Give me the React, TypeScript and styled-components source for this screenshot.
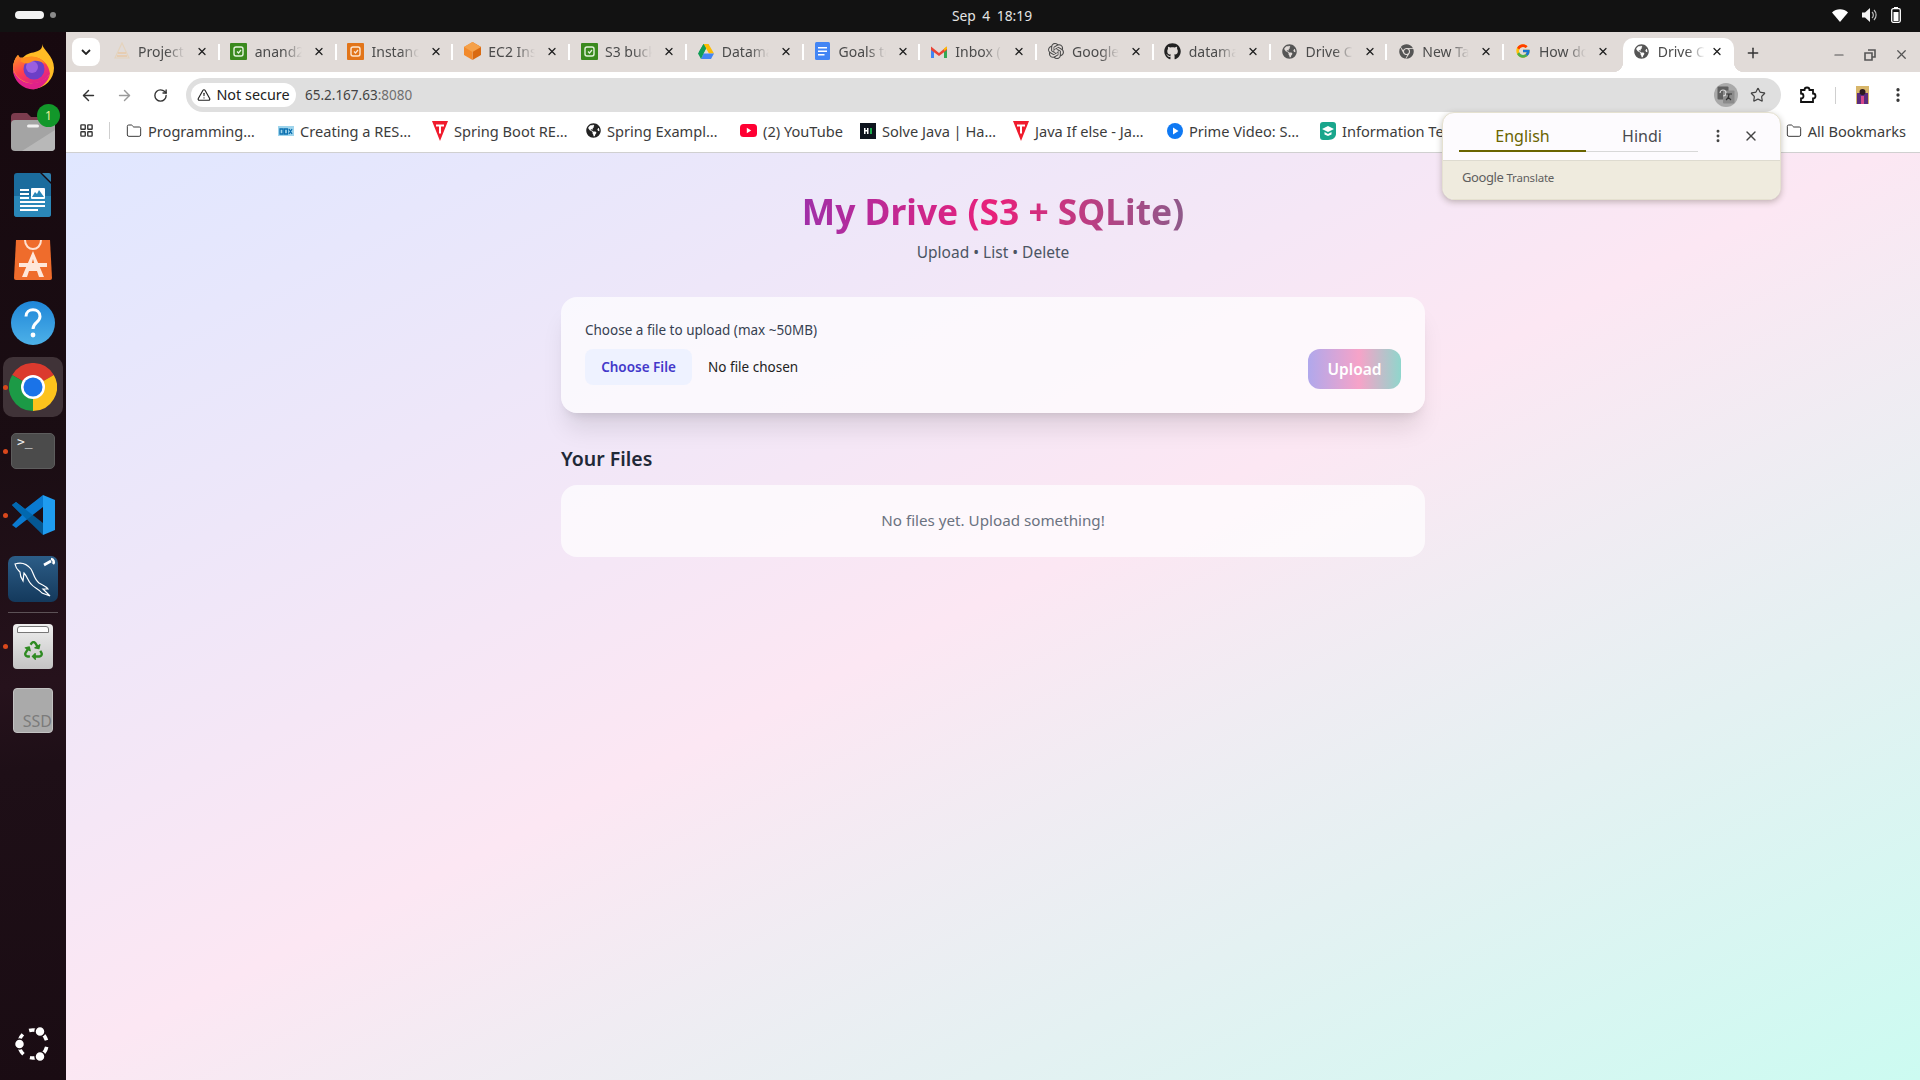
import type { ReactNode } from "react";
import { ArrowLeft, ArrowRight, EllipsisVertical, Folder, LayoutGrid, Minus, Plus, RotateCw, Star, TriangleAlert, X } from "lucide-react";
import { FaChrome, FaGithub, FaGlobeAmericas, FaRecycle } from "react-icons/fa";
import { FcGoogle } from "react-icons/fc";
import { SiOpenai } from "react-icons/si";
import styled, { createGlobalStyle } from "styled-components";

const GlobalStyle = createGlobalStyle`
  html, body { margin: 0; height: 100%; }
  body { font-family: "Noto Sans", "Liberation Sans", sans-serif; overflow: hidden; }
  #root { height: 100%; }
  * { box-sizing: border-box; }
`;

const Desktop = styled.div`
  width: 1920px;
  height: 1080px;
  display: flex;
  flex-direction: column;
  background: #111;
`;

const TopBar = styled.header`
  height: 32px;
  flex: none;
  display: grid;
  grid-template-columns: 1fr auto 1fr;
  align-items: center;
  padding: 0 19px 2px 15px;
  background: #121212;
  color: #e4e4e4;
  font-size: 13.8px;
`;

const Workspaces = styled.div`
  display: flex;
  align-items: center;
  gap: 6px;
`;

const WorkspacePill = styled.span<{ $active?: boolean }>`
  width: ${(p) => (p.$active ? "29px" : "6px")};
  height: ${(p) => (p.$active ? "8px" : "6px")};
  border-radius: 4px;
  background: ${(p) => (p.$active ? "#f2f2f2" : "#8a8a8a")};
`;

const Clock = styled.div`
  padding-left: 68px;
  word-spacing: 3px;
`;

const Tray = styled.div`
  display: flex;
  justify-content: flex-end;
  align-items: center;
  gap: 14px;
`;

const Body = styled.div`
  flex: 1;
  min-height: 0;
  display: flex;
`;

const Dock = styled.nav`
  width: 66px;
  flex: none;
  display: flex;
  flex-direction: column;
  padding: 3px 0 4px;
  background: linear-gradient(172deg, #17090f 0%, #1a0d13 40%, #26121c 62%, #1e0f17 70%, #1a0c13 100%);
`;

const DockItem = styled.div<{ $bottom?: boolean }>`
  position: relative;
  height: 64px;
  flex: none;
  display: flex;
  align-items: center;
  justify-content: center;
  margin-top: ${(p) => (p.$bottom ? "auto" : "0")};
`;

const DockTile = styled.div`
  width: 60px;
  height: 60px;
  border-radius: 10px;
  background: #403338;
  display: flex;
  align-items: center;
  justify-content: center;
`;

const RunDot = styled.span`
  position: absolute;
  left: 3px;
  top: 50%;
  width: 5px;
  height: 5px;
  margin-top: -2px;
  border-radius: 50%;
  background: #d9481c;
`;

const DockBadge = styled.span`
  position: absolute;
  right: 6px;
  top: 5px;
  width: 23px;
  height: 23px;
  border-radius: 50%;
  background: #12972a;
  color: #f1ef9c;
  font-size: 12px;
  display: flex;
  align-items: center;
  justify-content: center;
`;

const DockRule = styled.div`
  height: 1px;
  margin: 1px 8px 1px;
  background: #5c5156;
  flex: none;
`;

const TerminalIcon = styled.div`
  width: 44px;
  height: 36px;
  border-radius: 5px;
  background: #4b4b4b;
  border: 1px solid #5d5d5d;
  color: #f2f2f2;
  font: 13px/15px "DejaVu Sans Mono", monospace;
  padding: 0 0 0 5px;
`;

const TrashTile = styled.div`
  width: 40px;
  height: 45px;
  border-radius: 4px;
  background: linear-gradient(#eeeeee, #c4c4c4);
  display: flex;
  flex-direction: column;
  align-items: center;
  gap: 8px;
  padding-top: 2px;
`;

const TrashSlot = styled.span`
  width: 32px;
  height: 7px;
  background: #fdfdfd;
  border: 1px solid #777;
  border-radius: 3px 3px 0 0;
`;

const SsdTile = styled.div`
  width: 40px;
  height: 45px;
  border-radius: 4px;
  background: #aaaaaa;
  border: 1px solid #c2c2c2;
  color: #7b7b7b;
  font-size: 16px;
  line-height: 18px;
  display: flex;
  align-items: flex-end;
  justify-content: flex-end;
  padding: 0 0 2px;
  overflow: hidden;
`;

const MysqlTile = styled.div`
  width: 50px;
  height: 46px;
  border-radius: 7px;
  background: linear-gradient(#2c5d87, #14395c);
  display: flex;
  align-items: center;
  justify-content: center;
`;

const BrowserWindow = styled.div`
  position: relative;
  flex: 1;
  min-width: 0;
  display: flex;
  flex-direction: column;
  background: #fff;
`;

const TabStrip = styled.div`
  height: 40px;
  flex: none;
  display: flex;
  align-items: flex-end;
  padding-left: 6px;
  background: #e1dbd8;
`;

const TabSearch = styled.div`
  width: 28px;
  height: 28px;
  margin: 0 3px 6px 0;
  border-radius: 8px;
  background: #fff;
  color: #222;
  display: flex;
  align-items: center;
  justify-content: center;
`;

const Tab = styled.div<{ $active?: boolean; $last?: boolean }>`
  position: relative;
  width: ${(p) => (p.$active ? "111px" : "116.75px")};
  height: 34px;
  flex: none;
  display: flex;
  align-items: center;
  padding-left: 10px;
  padding-bottom: 8px;
  margin-left: ${(p) => (p.$active ? "2px" : "0")};
  border-radius: 10px 10px 0 0;
  background: ${(p) => (p.$active ? "#fff" : "transparent")};
  font-size: 14px;
  color: #4b4b4b;

  &::after {
    content: "";
    display: ${(p) => (p.$active || p.$last ? "none" : "block")};
    position: absolute;
    right: 0;
    top: 6px;
    width: 2px;
    height: 16px;
    background: #fff;
  }

  &::before {
    content: "";
    display: ${(p) => (p.$active ? "block" : "none")};
    position: absolute;
    left: -10px;
    right: -10px;
    bottom: 0;
    height: 10px;
    z-index: 0;
    background:
      radial-gradient(circle at 0 0, #e1dbd8 10px, #fff 10.5px) left / 10px 10px no-repeat,
      radial-gradient(circle at 100% 0, #e1dbd8 10px, #fff 10.5px) right / 10px 10px no-repeat;
  }
`;

const TabIcon = styled.span`
  width: 18px;
  height: 18px;
  flex: none;
  display: flex;
  align-items: center;
  justify-content: center;
  color: #4a4a4a;
`;

const TabTitle = styled.span`
  width: 47px;
  margin-left: 7px;
  flex: none;
  overflow: hidden;
  white-space: nowrap;
  -webkit-mask-image: linear-gradient(90deg, #000 60%, transparent 100%);
  mask-image: linear-gradient(90deg, #000 60%, transparent 100%);
`;

const TabClose = styled.span<{ $active?: boolean }>`
  width: 12px;
  margin-left: ${(p) => (p.$active ? "6px" : "11px")};
  display: flex;
  justify-content: center;
  color: #222;
`;

const NewTab = styled.div`
  width: 16px;
  margin: 0 0 9px 11px;
  color: #333;
  display: flex;
  align-self: flex-end;
  height: 20px;
  align-items: center;
`;

const WindowControls = styled.div`
  margin-left: auto;
  display: flex;
  align-items: center;
  gap: 18px;
  padding: 0 11px 8px 0;
  height: 27px;
  color: #555;
`;

const Toolbar = styled.div`
  height: 40px;
  flex: none;
  display: flex;
  align-items: flex-start;
  padding: 6px 0 0 4px;
`;

const NavButton = styled.div<{ $dim?: boolean; $end?: boolean }>`
  width: 36px;
  height: 34px;
  flex: none;
  margin-left: ${(p) => (p.$end ? "11px" : "0")};
  display: flex;
  align-items: center;
  justify-content: center;
  color: ${(p) => (p.$dim ? "#9a9a9a" : "#333")};
`;

const Omnibox = styled.div`
  flex: none;
  width: 1595px;
  height: 34px;
  margin-left: 8px;
  border-radius: 17px;
  background: #dfdfdf;
  display: flex;
  align-items: center;
  padding: 0 6px 0 5px;
`;

const SecurityChip = styled.div`
  height: 24px;
  width: 105px;
  border-radius: 12px;
  background: #fff;
  display: flex;
  align-items: center;
  justify-content: center;
  gap: 5px;
  font-size: 14.4px;
  line-height: 22px;
  padding-bottom: 1px;
  color: #222;
  white-space: nowrap;
`;

const Url = styled.div`
  margin-left: 9px;
  font-size: 13.5px;
  color: #444;
  span { color: #6f6f6f; }
`;

const OmniActions = styled.div`
  margin-left: auto;
  display: flex;
  align-items: center;
  gap: 12px;
  padding-right: 9px;
  color: #444;
`;

const TranslateChip = styled.div`
  width: 24px;
  height: 24px;
  border-radius: 50%;
  background: #a9a9a9;
  display: flex;
  align-items: center;
  justify-content: center;
`;

const ToolbarEnd = styled.div`
  flex: 1;
  height: 34px;
  display: flex;
  align-items: center;
  padding-left: 17px;
  color: #222;
`;

const ToolbarRule = styled.span`
  width: 1px;
  height: 17px;
  margin: 0 20px 0 17px;
  background: #cfcfcf;
`;

const Bookmarks = styled.div`
  height: 41px;
  flex: none;
  display: flex;
  align-items: center;
  padding: 0 14px 3px 11px;
  border-bottom: 1px solid #d0d0d0;
  background: #fff;
  font-size: 14.6px;
  color: #3c3c3c;
  overflow: hidden;
`;

const AppsButton = styled.div`
  width: 18px;
  display: flex;
  justify-content: center;
  color: #333;
`;

const BookmarkRule = styled.span`
  width: 1px;
  height: 17px;
  margin: 0 16px 0 14px;
  background: #cfcfcf;
`;

const Bookmark = styled.div<{ $width?: number }>`
  width: ${(p) => (p.$width ? `${p.$width}px` : "auto")};
  flex: none;
  display: flex;
  align-items: center;
  gap: 6px;
  white-space: nowrap;

  svg { flex: none; }
`;

const AllBookmarks = styled(Bookmark)`
  margin-left: auto;
`;

const TranslatePopup = styled.aside`
  position: absolute;
  left: 1376px;
  top: 80px;
  width: 339px;
  height: 88px;
  border-radius: 12px;
  background: #fdfbfe;
  border: 1px solid #e5e1d0;
  box-shadow: 0 2px 6px rgba(60, 50, 30, 0.3);
  overflow: hidden;
  z-index: 5;
  display: flex;
  flex-direction: column;
`;

const PopupTabs = styled.div`
  height: 47px;
  flex: none;
  display: flex;
  align-items: flex-start;
  padding: 0 0 0 16px;
  color: #444;
`;

const LangTab = styled.div<{ $active?: boolean; $width: number }>`
  width: ${(p) => p.$width}px;
  height: 39px;
  padding-top: 13px;
  text-align: center;
  font-size: 16px;
  line-height: 20px;
  color: ${(p) => (p.$active ? "#6a6400" : "#4a4a4f")};
  border-bottom: ${(p) => (p.$active ? "2px solid #6a6400" : "1px solid #d8d8d8")};
`;

const PopupActions = styled.div`
  display: flex;
  align-items: center;
  gap: 17px;
  padding: 15px 0 0 12px;
  color: #444;
`;

const PopupFooter = styled.div`
  flex: 1;
  display: flex;
  align-items: center;
  gap: 3px;
  padding: 0 0 6px 19px;
  background: #efebde;
  border-top: 1px solid #dedbd0;
  color: #5f5f5f;
`;

const GoogleMark = styled.span`
  font-size: 13px;
  letter-spacing: -0.4px;
`;

const TranslateMark = styled.span`
  font-size: 11.5px;
  letter-spacing: -0.2px;
`;

const Page = styled.main`
  flex: 1;
  min-height: 0;
  background: linear-gradient(to bottom right, #e0e7ff 0%, #fce7f3 49%, #ccfbf1 100%);
`;

const Container = styled.div`
  width: 864px;
  margin: 0 auto;
  padding-top: 32px;
`;

const Title = styled.h1`
  margin: 0;
  height: 52px;
  font-size: 35.4px;
  line-height: 52px;
  font-weight: 700;
  text-align: center;
  background: linear-gradient(90deg, #4444e3, #e8207a 50%, #1ea49f);
  -webkit-background-clip: text;
  background-clip: text;
  color: transparent;
`;

const Subtitle = styled.p`
  margin: 3px 0 33px;
  height: 24px;
  font-size: 15.5px;
  line-height: 24px;
  text-align: center;
  color: #4b5563;
`;

const UploadCard = styled.section`
  height: 116px;
  padding: 24px;
  border-radius: 16px;
  background: rgba(255, 255, 255, 0.7);
  box-shadow: 0 20px 25px -5px rgba(0, 0, 0, 0.1), 0 8px 10px -6px rgba(0, 0, 0, 0.1);
`;

const FieldLabel = styled.div`
  height: 20px;
  margin-bottom: 8px;
  font-size: 13.5px;
  line-height: 18px;
  color: #374151;
`;

const UploadRow = styled.div`
  display: flex;
  align-items: flex-start;
  justify-content: space-between;
`;

const FilePicker = styled.div`
  display: flex;
  align-items: center;
  gap: 16px;
  font-size: 13.5px;
  line-height: 34px;
  color: #222;
`;

const ChooseButton = styled.div`
  width: 107px;
  height: 36px;
  border-radius: 8px;
  background: #eef2ff;
  color: #4338ca;
  font-weight: 600;
  font-size: 13.5px;
  display: flex;
  align-items: center;
  justify-content: center;
`;

const UploadButton = styled.button`
  width: 93px;
  height: 40px;
  border: 0;
  border-radius: 12px;
  background: linear-gradient(90deg, #b0a8ec, #f6a3c8 55%, #8fd6cc);
  color: #fff;
  font: 600 15.5px "Noto Sans", sans-serif;
`;

const SectionTitle = styled.h2`
  margin: 32px 0 12px;
  height: 28px;
  font-size: 19.5px;
  line-height: 28px;
  font-weight: 600;
  color: #1f2937;
`;

const EmptyCard = styled.section`
  height: 72px;
  padding-bottom: 2px;
  border-radius: 16px;
  background: rgba(255, 255, 255, 0.7);
  display: flex;
  align-items: center;
  justify-content: center;
  font-size: 15.2px;
  color: #6b7280;
`;

const FirefoxIcon = () => (
  <svg width="46" height="46" viewBox="0 0 46 46">
    <defs>
      <linearGradient id="ff" x1="0" y1="0" x2="0.6" y2="1">
        <stop offset="0" stopColor="#ff9a22" />
        <stop offset="0.55" stopColor="#ff3f4e" />
        <stop offset="1" stopColor="#e0218a" />
      </linearGradient>
    </defs>
    <path d="M32 0c1 6 12 12 12 24a20.500 20.500 0 0 1-41 0c0-5 2-10 5-13 1 2 2 3 4 4 3-5 9-6 13-7 4-1 8-3 7-8z" fill="#ffbc25" />
    <path d="M3 24c0-5 2-10 5-13 1 2 2 3 4 4 6-3 14-3 20 1 5 4 7 7 8 14a20.500 20.500 0 0 1-37-6z" fill="url(#ff)" />
    <path d="M23.500 45.500A20.500 20.500 0 0 1 3 26c3 6 8 12 16 13 6 1 16-2 21-9a20.500 20.500 0 0 1-16.500 15.500z" fill="#e0218a" />
    <circle cx="24" cy="25" r="10.500" fill="#6b3fc7" />
    <circle cx="22" cy="23" r="6" fill="#9a5fe0" />
    <path d="M7 11c3 3 6 3 10 2 7-2 15 1 18 7-6-4-11-4-14-2-3 2-7 2-11-1 2-1 2-3-3-6z" fill="#ff8f1f" />
  </svg>
);

const FilesIcon = () => (
  <svg width="46" height="42" viewBox="0 0 46 42">
    <path d="M1 7a4 4 0 0 1 4-4h12l4 4h21a3 3 0 0 1 3 3v10H1z" fill="#7c3c4e" />
    <rect x="1" y="10" width="44" height="31" rx="4" fill="#a4a4a4" />
    <path d="M45 20v17a4 4 0 0 1-4 4H12z" fill="#b8b8b8" />
    <rect x="17" y="14.500" width="12" height="3" rx="1.500" fill="#f1f1f1" />
  </svg>
);

const WriterIcon = () => (
  <svg width="38" height="46" viewBox="0 0 38 46">
    <path d="M3 1h23l11 11v30a3 3 0 0 1-3 3H3a3 3 0 0 1-3-3V4a3 3 0 0 1 3-3z" fill="#1b6c9d" />
    <path d="M0 24h37v18a3 3 0 0 1-3 3H3a3 3 0 0 1-3-3z" fill="#2a87b8" />
    <path d="M28 1h7a2 2 0 0 1 2 2v7z" fill="#2e7fae" />
    <path d="M6 17h9v2H6zM6 21h9v2H6zM6 25h9v2H6zM6 29h25v2H6zM6 33h25v2H6zM6 37h18v2H6z" fill="#fff" />
    <rect x="17" y="16" width="14" height="11" rx="1" fill="#fff" />
    <path d="M18 25l3-5 2 2 2-4 5 7z" fill="#2a87b8" />
  </svg>
);

const StoreIcon = () => (
  <svg width="38" height="44" viewBox="0 0 38 44">
    <path d="M2 3h34l2 38a2 2 0 0 1-2 2H2a2 2 0 0 1-2-2z" fill="#ef6c2c" />
    <path d="M11 3c0 12 16 12 16 0" stroke="#ffe0cf" strokeWidth="2" fill="none" />
    <path d="M19 14l-11 26h5l2-6h8l2 6h5zM17 29l2-7 2 7z" fill="#ffe7da" />
    <path d="M5 26h28v4H5z" fill="#ffe7da" />
  </svg>
);

const HelpIcon = () => (
  <svg width="46" height="46" viewBox="0 0 46 46">
    <defs>
      <linearGradient id="hp" x1="0" y1="0" x2="0" y2="1">
        <stop offset="0" stopColor="#1f86d8" />
        <stop offset="1" stopColor="#4db1e8" />
      </linearGradient>
    </defs>
    <circle cx="23" cy="23" r="22" fill="url(#hp)" />
    <path d="M16 16.500c0-9 14-9 14 0 0 6-7 6-7 12.500" stroke="#fff" strokeWidth="3" fill="none" />
    <circle cx="23" cy="35" r="2.400" fill="#fff" />
  </svg>
);

const ChromeIcon = ({ size }: { size: number }) => (
  <svg width={size} height={size} viewBox="0 0 48 48">
    <path d="M24 24L3.200 12A24 24 0 0 1 44.800 12z" fill="#db3a2e" />
    <path d="M24 24L44.800 12A24 24 0 0 1 24 48z" fill="#fcc31c" />
    <path d="M24 24L24 48A24 24 0 0 1 3.200 12z" fill="#1c9a46" />
    <circle cx="24" cy="24" r="12" fill="#fff" />
    <circle cx="24" cy="24" r="9.500" fill="#1a73e8" />
  </svg>
);

const VscodeIcon = () => (
  <svg width="44" height="42" viewBox="0 0 44 42">
    <path d="M32 1l12 5v30l-12 5z" fill="#1f9cf0" />
    <path d="M32 1v12L14 27l-9 7-4-3 10-10L1 11l4-3 9 7z" fill="#0a7ad0" />
    <path d="M32 41V29L14 15 5 8 1 11l31 30z" fill="#0065a9" opacity="0.85" />
  </svg>
);

const DolphinIcon = () => (
  <svg width="50" height="46" viewBox="0 0 50 46" fill="none" stroke="#fff" strokeWidth="1.200">
    <path d="M7 8c6-2 12 0 16 5 3 5 3 10 8 14 3 2 7 3 9 6l-5 0 7 7-8-3c-3-4-8-5-11-9-3-3-4-8-7-11l-1 8c-2-3-3-6-3-9-2-2-4-3-5-8z" />
    <path d="M36 9l7-4M43 3a3 3 0 0 1 2 5" strokeWidth="2.600" />
  </svg>
);

const UbuntuIcon = () => (
  <svg width="38" height="38" viewBox="0 0 38 38">
    <circle cx="19" cy="19" r="14" fill="none" stroke="#fff" strokeWidth="3.500" strokeDasharray="22 7.300" strokeDashoffset="-3" />
    <circle cx="5.500" cy="19" r="5" fill="#fff" stroke="#1a0c13" strokeWidth="1.500" />
    <circle cx="26" cy="6.500" r="5" fill="#fff" stroke="#1a0c13" strokeWidth="1.500" />
    <circle cx="26" cy="31.500" r="5" fill="#fff" stroke="#1a0c13" strokeWidth="1.500" />
  </svg>
);

const WifiIcon = () => (
  <svg width="16" height="14" viewBox="0 0 16 14">
    <path d="M0 4.500a11.500 11.500 0 0 1 16 0L8 14z" fill="#fff" />
  </svg>
);

const SpeakerIcon = () => (
  <svg width="15" height="14" viewBox="0 0 15 14">
    <path d="M0 4.500h3L8 0v14l-5-4.500H0z" fill="#f2f2f2" />
    <path d="M10 4a4 4 0 0 1 0 6M12 2a7 7 0 0 1 0 10" stroke="#bdbdbd" strokeWidth="1.200" fill="none" />
  </svg>
);

const BatteryIcon = () => (
  <svg width="10" height="16" viewBox="0 0 10 16">
    <rect x="3" y="0" width="4" height="2" fill="#fff" />
    <rect x="0.700" y="1.700" width="8.600" height="13.600" rx="1.500" fill="none" stroke="#fff" strokeWidth="1.300" />
    <rect x="2.500" y="5" width="5" height="9" fill="#fff" />
  </svg>
);

const CubeIcon = ({ bg, inner }: { bg: string; inner: string }) => (
  <svg width="17" height="17" viewBox="0 0 17 17">
    <rect width="17" height="17" rx="1" fill={bg} />
    <rect x="4" y="4" width="9" height="9" rx="2" fill="none" stroke={inner} strokeWidth="1.400" />
    <path d="M7 8.500l1.500 1.500L11 7" stroke={inner} strokeWidth="1.200" fill="none" />
  </svg>
);

const HexIcon = () => (
  <svg width="17" height="18" viewBox="0 0 17 18">
    <path d="M8.500 0L17 5v8l-8.500 5z" fill="#d96a12" />
    <path d="M8.500 0L0 5v8l8.500 5z" fill="#f28a2c" />
    <path d="M8.500 0L17 5l-8.500 5L0 5z" fill="#f5a14a" />
  </svg>
);

const DriveIcon = () => (
  <svg width="16" height="15" viewBox="0 0 16 15">
    <path d="M5.500 0h5L6 8H1z" fill="#1ba260" />
    <path d="M10.500 0L16 9.500h-5L5.500 0z" fill="#fbbc04" />
    <path d="M3 15l2.500-5.500H16L13 15z" fill="#4285f4" />
    <path d="M0 9.500L5.500 0 8 4.500 3 15z" fill="#0f9d58" />
  </svg>
);

const DocsIcon = () => (
  <svg width="15" height="18" viewBox="0 0 15 18">
    <rect width="15" height="18" rx="1.500" fill="#4285f4" />
    <path d="M3 5h9v1.600H3zM3 8.500h9v1.600H3zM3 12h6.500v1.600H3z" fill="#fff" />
  </svg>
);

const GmailIcon = () => (
  <svg width="16" height="13" viewBox="0 0 16 13">
    <path d="M0 2v11h3V5z" fill="#4285f4" />
    <path d="M16 2v11h-3V5z" fill="#34a853" />
    <path d="M0 1.500L8 8l8-6.500V5L8 11 0 5z" fill="#ea4335" />
    <path d="M13 3.500L16 1.500V4l-3 2z" fill="#fbbc04" />
  </svg>
);

const TutorialIcon = () => (
  <svg width="16" height="20" viewBox="0 0 16 20">
    <path d="M0 0h16L8 20z" fill="#f01b2d" />
    <path d="M4 3.500h8v2H9v7H7v-7H4z" fill="#fff" />
  </svg>
);

const YoutubeIcon = () => (
  <svg width="17" height="13" viewBox="0 0 17 13">
    <rect width="17" height="13" rx="3.500" fill="#ff0033" />
    <path d="M6.800 3.800v5.400l4.400-2.700z" fill="#fff" />
  </svg>
);

const HackerRankIcon = () => (
  <svg width="16" height="16" viewBox="0 0 16 16">
    <rect width="16" height="16" fill="#0e141e" />
    <path d="M4 5h1.500v2h1.500V5h1.500v6H7V8.500H5.500V11H4z" fill="#fff" />
    <rect x="10" y="5" width="2" height="6" fill="#1ba94c" />
  </svg>
);

const PrimeIcon = () => (
  <svg width="16" height="16" viewBox="0 0 16 16">
    <circle cx="8" cy="8" r="8" fill="#0f79f3" />
    <path d="M6 4.500v7l5.500-3.500z" fill="#fff" />
  </svg>
);

const LearnIcon = () => (
  <svg width="16" height="18" viewBox="0 0 16 18">
    <path d="M3 0h10a3 3 0 0 1 3 3v9c0 3-3 6-8 6H3a3 3 0 0 1-3-3V3a3 3 0 0 1 3-3z" fill="#19a68c" />
    <path d="M8 4l6 3-6 3-6-3zM4.500 10l3.500 2 3.500-2v2.500L8 14l-3.500-1.500z" fill="#fff" />
  </svg>
);

const BoxIcon = () => (
  <svg width="16" height="12" viewBox="0 0 16 12">
    <rect y="1" width="16" height="10" fill="#9ed4ec" />
    <path d="M2 4h3v5H2zM6.500 4h3v5h-3zM11 4l3 5M14 4l-3 5" stroke="#0a6fb0" strokeWidth="1.300" fill="none" />
  </svg>
);

const TranslateGlyph = () => (
  <svg width="18" height="18" viewBox="0 0 18 18">
    <rect x="0.500" y="0.500" width="11" height="13" rx="1" fill="#5f5f5f" />
    <rect x="6" y="4.500" width="11.500" height="13" rx="1" fill="#8b8b8b" />
    <path d="M3 7a3 3 0 1 1 3 3" stroke="#d7d7d7" strokeWidth="1.200" fill="none" />
    <path d="M9 8h6M12 8c0 3-1.500 5-3 6M11 11l3 3" stroke="#333" strokeWidth="1.100" fill="none" />
  </svg>
);

const ExtensionGlyph = () => (
  <svg width="20" height="20" viewBox="0 0 20 20">
    <path d="M3 5h3.500a2.500 2.500 0 0 1 5 0H15v3.500a2.500 2.500 0 0 1 0 5V17H3v-3.500a2.500 2.500 0 0 0 0-5z" fill="none" stroke="#111" strokeWidth="1.800" />
  </svg>
);

const AvatarGlyph = () => (
  <svg width="13" height="18" viewBox="0 0 13 18">
    <rect width="13" height="18" fill="#d8b66a" />
    <rect x="1" y="7" width="11" height="11" fill="#5b2b7e" />
    <circle cx="6.500" cy="6" r="3" fill="#2b1a22" />
    <rect x="5" y="10" width="3" height="8" fill="#d6488a" />
  </svg>
);

type TabData = { title: string; icon: ReactNode };

const tabs: TabData[] = [
  { title: "Project", icon: <svg width="16" height="18" viewBox="0 0 16 18"><path d="M8 1l7 15H1z" fill="none" stroke="#e4d3bd" strokeWidth="1.200" /><path d="M4 11h8M3 14h10" stroke="#ecbf8c" strokeWidth="1" /></svg> },
  { title: "anand2", icon: <CubeIcon bg="#3a8a1e" inner="#e3f3dc" /> },
  { title: "Instances", icon: <CubeIcon bg="#e2751a" inner="#fde6d0" /> },
  { title: "EC2 Instances", icon: <HexIcon /> },
  { title: "S3 buckets", icon: <CubeIcon bg="#3a8a1e" inner="#e3f3dc" /> },
  { title: "Datamatics", icon: <DriveIcon /> },
  { title: "Goals to do", icon: <DocsIcon /> },
  { title: "Inbox (12)", icon: <GmailIcon /> },
  { title: "Google AI", icon: <SiOpenai size={16} /> },
  { title: "datamatics", icon: <FaGithub size={17} color="#222" /> },
  { title: "Drive Clone", icon: <FaGlobeAmericas size={15} color="#555" /> },
  { title: "New Tab", icon: <FaChrome size={15} color="#555" /> },
  { title: "How do I", icon: <FcGoogle size={16} /> },
];

const bookmarks: { label: string; icon: ReactNode; width: number }[] = [
  { label: "Programming…", icon: <Folder size={16} strokeWidth={1.5} />, width: 152 },
  { label: "Creating a RES…", icon: <BoxIcon />, width: 154 },
  { label: "Spring Boot RE…", icon: <TutorialIcon />, width: 154 },
  { label: "Spring Exampl…", icon: <FaGlobeAmericas size={15} color="#222" />, width: 154 },
  { label: "(2) YouTube", icon: <YoutubeIcon />, width: 120 },
  { label: "Solve Java | Ha…", icon: <HackerRankIcon />, width: 153 },
  { label: "Java If else - Ja…", icon: <TutorialIcon />, width: 154 },
  { label: "Prime Video: S…", icon: <PrimeIcon />, width: 153 },
  { label: "Information Te", icon: <LearnIcon />, width: 122 },
];

const App = () => (
  <Desktop>
    <GlobalStyle />
    <TopBar>
      <Workspaces>
        <WorkspacePill $active />
        <WorkspacePill />
      </Workspaces>
      <Clock>Sep 4 18:19</Clock>
      <Tray>
        <WifiIcon />
        <SpeakerIcon />
        <BatteryIcon />
      </Tray>
    </TopBar>
    <Body>
      <Dock>
        <DockItem><FirefoxIcon /></DockItem>
        <DockItem>
          <FilesIcon />
          <DockBadge>1</DockBadge>
        </DockItem>
        <DockItem><WriterIcon /></DockItem>
        <DockItem><StoreIcon /></DockItem>
        <DockItem><HelpIcon /></DockItem>
        <DockItem>
          <RunDot />
          <DockTile><ChromeIcon size={48} /></DockTile>
        </DockItem>
        <DockItem>
          <RunDot />
          <TerminalIcon>&gt;_</TerminalIcon>
        </DockItem>
        <DockItem>
          <RunDot />
          <VscodeIcon />
        </DockItem>
        <DockItem>
          <MysqlTile><DolphinIcon /></MysqlTile>
        </DockItem>
        <DockRule />
        <DockItem>
          <RunDot />
          <TrashTile>
            <TrashSlot />
            <FaRecycle size={19} color="#2e8b22" />
          </TrashTile>
        </DockItem>
        <DockItem>
          <SsdTile>SSD</SsdTile>
        </DockItem>
        <DockItem $bottom><UbuntuIcon /></DockItem>
      </Dock>
      <BrowserWindow>
        <TabStrip>
          <TabSearch>
            <svg width="10" height="6" viewBox="0 0 10 6"><path d="M1 1l4 4 4-4" stroke="#222" strokeWidth="1.800" fill="none" /></svg>
          </TabSearch>
          {tabs.map((t, i) => (
            <Tab key={t.title} $last={i === tabs.length - 1}>
              <TabIcon>{t.icon}</TabIcon>
              <TabTitle>{t.title}</TabTitle>
              <TabClose><X size={13} strokeWidth={2.5} /></TabClose>
            </Tab>
          ))}
          <Tab $active>
            <TabIcon><FaGlobeAmericas size={15} color="#555" /></TabIcon>
            <TabTitle>Drive Clone</TabTitle>
            <TabClose $active><X size={13} strokeWidth={2.5} /></TabClose>
          </Tab>
          <NewTab><Plus size={16} strokeWidth={2.2} /></NewTab>
          <WindowControls>
            <Minus size={14} />
            <svg width="12" height="12" viewBox="0 0 12 12"><path d="M4 1h7v7H8M1 4h7v7H1z" fill="none" stroke="#555" strokeWidth="1.600" /></svg>
            <X size={15} strokeWidth={2} />
          </WindowControls>
        </TabStrip>
        <Toolbar>
          <NavButton><ArrowLeft size={17} strokeWidth={2} /></NavButton>
          <NavButton $dim><ArrowRight size={17} strokeWidth={2} /></NavButton>
          <NavButton><RotateCw size={15} strokeWidth={2.2} /></NavButton>
          <Omnibox>
            <SecurityChip>
              <TriangleAlert size={14} strokeWidth={2} />
              Not secure
            </SecurityChip>
            <Url>65.2.167.63<span>:8080</span></Url>
            <OmniActions>
              <TranslateChip><TranslateGlyph /></TranslateChip>
              <Star size={16} strokeWidth={1.8} />
            </OmniActions>
          </Omnibox>
          <ToolbarEnd>
            <ExtensionGlyph />
            <ToolbarRule />
            <AvatarGlyph />
            <NavButton $end><EllipsisVertical size={18} strokeWidth={2.4} /></NavButton>
          </ToolbarEnd>
        </Toolbar>
        <Bookmarks>
          <AppsButton><LayoutGrid size={15} strokeWidth={2.2} /></AppsButton>
          <BookmarkRule />
          {bookmarks.map((b) => (
            <Bookmark key={b.label} $width={b.width}>
              {b.icon}
              {b.label}
            </Bookmark>
          ))}
          <AllBookmarks>
            <Folder size={16} strokeWidth={1.5} />
            All Bookmarks
          </AllBookmarks>
        </Bookmarks>
        <TranslatePopup>
          <PopupTabs>
            <LangTab $active $width={127}>English</LangTab>
            <LangTab $width={112}>Hindi</LangTab>
            <PopupActions>
              <EllipsisVertical size={16} strokeWidth={2.4} />
              <X size={16} strokeWidth={2} />
            </PopupActions>
          </PopupTabs>
          <PopupFooter>
            <GoogleMark>Google</GoogleMark>
            <TranslateMark>Translate</TranslateMark>
          </PopupFooter>
        </TranslatePopup>
        <Page>
          <Container>
            <Title>My Drive (S3 + SQLite)</Title>
            <Subtitle>Upload • List • Delete</Subtitle>
            <UploadCard>
              <FieldLabel>Choose a file to upload (max ~50MB)</FieldLabel>
              <UploadRow>
                <FilePicker>
                  <ChooseButton>Choose File</ChooseButton>
                  No file chosen
                </FilePicker>
                <UploadButton>Upload</UploadButton>
              </UploadRow>
            </UploadCard>
            <SectionTitle>Your Files</SectionTitle>
            <EmptyCard>No files yet. Upload something!</EmptyCard>
          </Container>
        </Page>
      </BrowserWindow>
    </Body>
  </Desktop>
);

export default App;
